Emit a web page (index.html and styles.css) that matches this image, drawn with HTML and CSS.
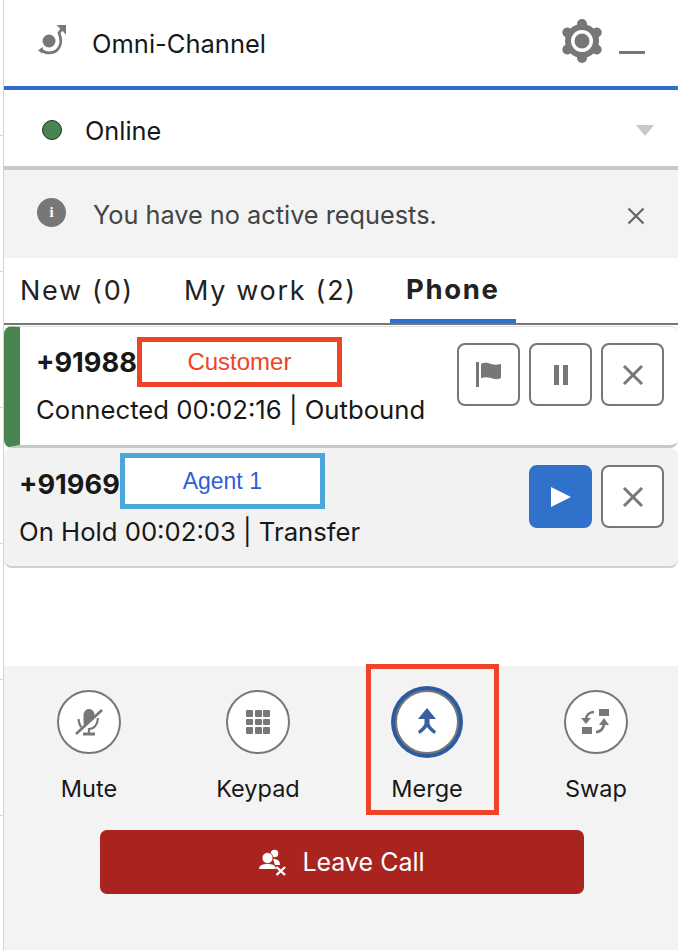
FILE: index.html
```html
<!DOCTYPE html>
<html lang="en">
<head>
<meta charset="utf-8">
<title>Omni-Channel</title>
<link rel="stylesheet" href="styles.css">
</head>
<body>
<div class="panel">
  <header class="head">
    <svg class="omni-icon" viewBox="0 0 32 32" width="32" height="32"><circle cx="13" cy="18" r="6.500" fill="#777"/><path d="M26 6L23 10C26 17 25 24 20 28C15 31 9 30 4 26.500" fill="none" stroke="#777" stroke-width="2.800"/><path d="M20.500 2H30V11.500Z" fill="#777"/><path d="M2 27.500L7 24L6.500 30.500Z" fill="#777"/></svg>
    <span class="head-title">Omni-Channel</span>
    <svg class="gear" viewBox="0 0 44 44" width="44" height="44"><g stroke="#777" stroke-width="10" stroke-linecap="round"><path d="M22 5V39"/><path d="M7.300 13.500L36.700 30.500"/><path d="M7.300 30.500L36.700 13.500"/></g><circle cx="22" cy="22" r="17" fill="#777"/><circle cx="22" cy="22" r="11" fill="#fff"/><circle cx="22" cy="22" r="7.500" fill="#777"/></svg>
    <span class="minimize"></span>
  </header>
  <div class="status">
    <span class="dot"></span>
    <span class="status-text">Online</span>
    <span class="caret"></span>
  </div>
  <div class="notice">
    <span class="info">i</span>
    <span class="notice-text">You have no active requests.</span>
    <svg class="notice-x" viewBox="0 0 18 18" width="18" height="18"><path d="M1.500 1.500L16.500 16.500M16.500 1.500L1.500 16.500" stroke="#666" stroke-width="2.200" fill="none"/></svg>
  </div>
  <nav class="tabs">
    <span class="tab tab-new">New (0)</span>
    <span class="tab tab-work">My work (2)</span>
    <span class="tab tab-phone">Phone</span>
  </nav>
  <section class="card card-active">
    <div class="card-info">
      <div class="name-row"><span class="number">+91988</span><span class="tag tag-red">Customer</span></div>
      <div class="detail">Connected 00:02:16 | Outbound</div>
    </div>
    <div class="actions">
      <button class="btn"><svg viewBox="0 0 26 26" width="26" height="26"><rect x="0" y="0" width="3" height="25" fill="#777"/><path d="M5 2C9 0 12 1 15 2C18 3 21 3 25 2V16C21 18 18 17 15 16C12 15 9 15 5 16Z" fill="#777"/></svg></button>
      <button class="btn"><svg viewBox="0 0 16 22" width="16" height="22"><rect x="1" y="1" width="5" height="20" fill="#777"/><rect x="10" y="1" width="5" height="20" fill="#777"/></svg></button>
      <button class="btn"><svg viewBox="0 0 22 22" width="22" height="22"><path d="M2 2L20 20M20 2L2 20" stroke="#777" stroke-width="3" fill="none"/></svg></button>
    </div>
  </section>
  <section class="card card-hold">
    <div class="card-info">
      <div class="name-row"><span class="number">+91969</span><span class="tag tag-blue">Agent 1</span></div>
      <div class="detail">On Hold 00:02:03 | Transfer</div>
    </div>
    <div class="actions">
      <button class="btn btn-play"><svg viewBox="0 0 20 20" width="20" height="20"><path d="M0 0L20 10L0 20Z" fill="#fff"/></svg></button>
      <button class="btn"><svg viewBox="0 0 22 22" width="22" height="22"><path d="M2 2L20 20M20 2L2 20" stroke="#777" stroke-width="3" fill="none"/></svg></button>
    </div>
  </section>
  <div class="spacer"></div>
  <footer class="foot">
    <div class="controls">
      <div class="control">
        <span class="circle"><svg viewBox="0 0 28 28" width="28" height="28"><path d="M8.500 11V7.500C8.500 3.500 11 1 14 1C17 1 19.500 3.500 19.500 7.500V9L9 19C8.700 17 8.500 14 8.500 11Z" fill="#777"/><path d="M3.500 11C4 15 5 18 6.500 19" stroke="#777" stroke-width="2.200" fill="none"/><path d="M23 10C22.500 17 19 21 14 21V25" stroke="#777" stroke-width="2.200" fill="none"/><path d="M8 26H20" stroke="#777" stroke-width="3" fill="none"/><path d="M1 26L27 2" stroke="#777" stroke-width="2.600" fill="none"/></svg></span>
        <span class="control-label">Mute</span>
      </div>
      <div class="control">
        <span class="circle"><span class="keypad"><i></i><i></i><i></i><i></i><i></i><i></i><i></i><i></i><i></i></span></span>
        <span class="control-label">Keypad</span>
      </div>
      <div class="control control-merge">
        <span class="merge-box"></span>
        <span class="circle circle-merge"><svg viewBox="0 0 20 28" width="20" height="28"><path d="M10 0L19 11H12.500V15C12.500 17 15 20 19 23L17.500 26C14 23.500 11 21 10 19C9 21 6 23.500 2.500 26L1 23C5 20 7.500 17 7.500 15V11H1Z" fill="#3a5f9e"/></svg></span>
        <span class="control-label">Merge</span>
      </div>
      <div class="control">
        <span class="circle"><svg viewBox="0 0 30 28" width="30" height="28"><rect x="18" y="1" width="10" height="7" fill="#777"/><rect x="1" y="19" width="10" height="7" fill="#777"/><path d="M13 4C8 4 5 7 5 12" stroke="#777" stroke-width="2.600" fill="none"/><path d="M0 10H10L5 16Z" fill="#777"/><path d="M15 24C20 24 23 20 23 15" stroke="#777" stroke-width="2.600" fill="none"/><path d="M18 17H28L23 10Z" fill="#777"/></svg></span>
        <span class="control-label">Swap</span>
      </div>
    </div>
    <button class="leave">
      <svg viewBox="0 0 27 27" width="27" height="27"><circle cx="15.500" cy="4.500" r="3.800" fill="#fff"/><path d="M14 10C19 10 21 12 21 16H16Z" fill="#fff"/><circle cx="8.500" cy="9" r="5.500" stroke="#a9241f" stroke-width="0.800" fill="#fff"/><path d="M0 20C0 16 4 15 8.500 15C13 15 17 16 17 20Z" fill="#fff"/><path d="M17.500 18L26 26M26 18L17.500 26" stroke="#fff" stroke-width="2.400" fill="none"/></svg>
      <span>Leave Call</span>
    </button>
  </footer>
</div>
</body>
</html>
```

FILE: styles.css
```css
* { box-sizing: border-box; }
html, body { margin: 0; padding: 0; }
body {
  width: 678px;
  height: 950px;
  overflow: hidden;
  background: #fff repeating-linear-gradient(to bottom, transparent 0, transparent 135px, #d8d8d8 135px, #d8d8d8 136px);
  padding-left: 3px;
  font-family: Inter, "Liberation Sans", sans-serif;
  color: #181818;
}
.panel {
  width: 675px;
  height: 950px;
  background: #fff;
  border-left: 1px solid #d4d4d4;
  display: flex;
  flex-direction: column;
}
.head {
  height: 90px;
  flex: none;
  border-bottom: 4px solid #2f6fcb;
  display: flex;
  align-items: center;
  padding-left: 32px;
}
.omni-icon { flex: none; margin-top: -8px; }
.head-title { font-size: 25.500px; margin-left: 24px; margin-top: 1px; flex: 1; }
.gear { flex: none; margin-right: 15px; margin-top: -4px; }
.minimize { width: 26px; height: 3px; background: #777; margin-right: 33px; margin-top: 18px; }
.status {
  height: 80px;
  flex: none;
  border-bottom: 4px solid #c9c9c9;
  display: flex;
  align-items: center;
  padding: 4px 0 0 38px;
}
.dot {
  width: 20px; height: 20px; border-radius: 50%;
  background: #4a8550; border: 1px solid #1c3320; flex: none;
}
.status-text { font-size: 25.300px; margin-left: 23px; flex: 1; }
.caret {
  width: 0; height: 0; flex: none;
  border-left: 9px solid transparent;
  border-right: 9px solid transparent;
  border-top: 11px solid #c9c9c9;
  margin-right: 24px;
}
.notice {
  height: 88px;
  flex: none;
  background: #f3f3f3;
  display: flex;
  align-items: center;
  padding-left: 33px;
  color: #444;
}
.info {
  width: 29px; height: 29px; border-radius: 50%;
  background: #777; color: #fff; flex: none;
  font: bold 15px/29px "Liberation Serif", serif;
  text-align: center;
  margin-top: -3px;
}
.notice-text { font-size: 25.300px; margin-left: 27px; flex: 1; }
.notice-x { flex: none; margin-right: 33px; margin-top: 4px; }
.tabs {
  height: 67px;
  flex: none;
  border-bottom: 2px solid #777;
  display: flex;
  font-size: 27px;
  letter-spacing: 1.700px;
}
.tab { display: flex; align-items: center; height: 65px; color: #222; }
.tab-new { margin-left: 16px; }
.tab-work { margin-left: 50px; }
.tab-phone {
  margin-left: 33px;
  padding: 0 16px;
  font-size: 27.500px;
  font-weight: 700;
  border-bottom: 4px solid #2f6fcb;
}
.card {
  flex: none;
  display: flex;
  height: 120px;
  border-radius: 8px;
  border-bottom: 3px solid #c9c9c9;
}
.card-active {
  margin-top: 1px;
  border-top: 1px solid #ddd;
  border-left: 16px solid #4a8550;
  padding-left: 16px;
  height: 122px;
}
.card-hold {
  background: #f2f2f2;
  padding-left: 15px;
  border-bottom: 2px solid #cfcfcf;
}
.card-info { flex: 1; }
.name-row { display: flex; align-items: center; height: 50px; }
.card-active .name-row { margin-top: 10px; }
.card-hold .name-row { margin-top: 11px; }
.number { font-size: 27.200px; font-weight: 700; color: #181818; flex: none; }
.tag {
  flex: none;
  display: flex; align-items: center; justify-content: center;
  font-family: "Liberation Sans", sans-serif;
  background: #fff;
}
.tag-red { width: 205px; height: 50px; font-size: 24px; border: 5px solid #ee4324; color: #ee4324; }
.tag-blue { width: 205px; height: 56px; font-size: 23px; margin-bottom: 6px; border: 5px solid #4da6d9; color: #2d5fd8; }
.detail { font-size: 25.700px; line-height: 46px; }
.actions { display: flex; gap: 9px; padding-right: 14px; flex: none; }
.card-active .actions { padding-top: 16px; }
.card-hold .actions { padding-top: 17px; }
.btn {
  width: 63px; height: 63px; padding: 0;
  border: 2px solid #777;
  border-radius: 8px;
  background: #fff;
  display: flex; align-items: center; justify-content: center;
}
.btn-play { background: #3071cc; border-color: #3071cc; }
.spacer { flex: 1; }
.foot {
  height: 284px;
  flex: none;
  background: #f3f3f3;
  padding-left: 0.500px;
}
.controls {
  display: grid;
  grid-template-columns: repeat(4, 169px);
  padding-top: 24px;
}
.control {
  display: flex;
  flex-direction: column;
  align-items: center;
  position: relative;
}
.circle {
  width: 64px; height: 64px; border-radius: 50%;
  border: 2px solid #777;
  background: #fff;
  display: flex; align-items: center; justify-content: center;
}
.circle-merge { box-shadow: 0 0 0 4px #2c5ba3; }
.keypad {
  display: grid;
  grid-template-columns: repeat(3, 7px);
  grid-auto-rows: 6.500px;
  gap: 2px 1.500px;
}
.keypad i { background: #777; border-radius: 1px; display: block; }
.control-label { font-size: 23.500px; margin-top: 20px; line-height: 30px; color: #181818; }
.merge-box {
  position: absolute;
  left: 23px;
  top: -26px;
  width: 133px;
  height: 151px;
  border: 5px solid #ee4324;
}
.leave {
  display: flex; align-items: center; justify-content: center; gap: 16px;
  width: 484px; height: 64px;
  margin: 26px 0 0 95.500px;
  background: #a9241f;
  border: 0;
  border-radius: 7px;
  color: #fff;
  font: 400 25px Inter, "Liberation Sans", sans-serif;
  padding: 0;
}
```
